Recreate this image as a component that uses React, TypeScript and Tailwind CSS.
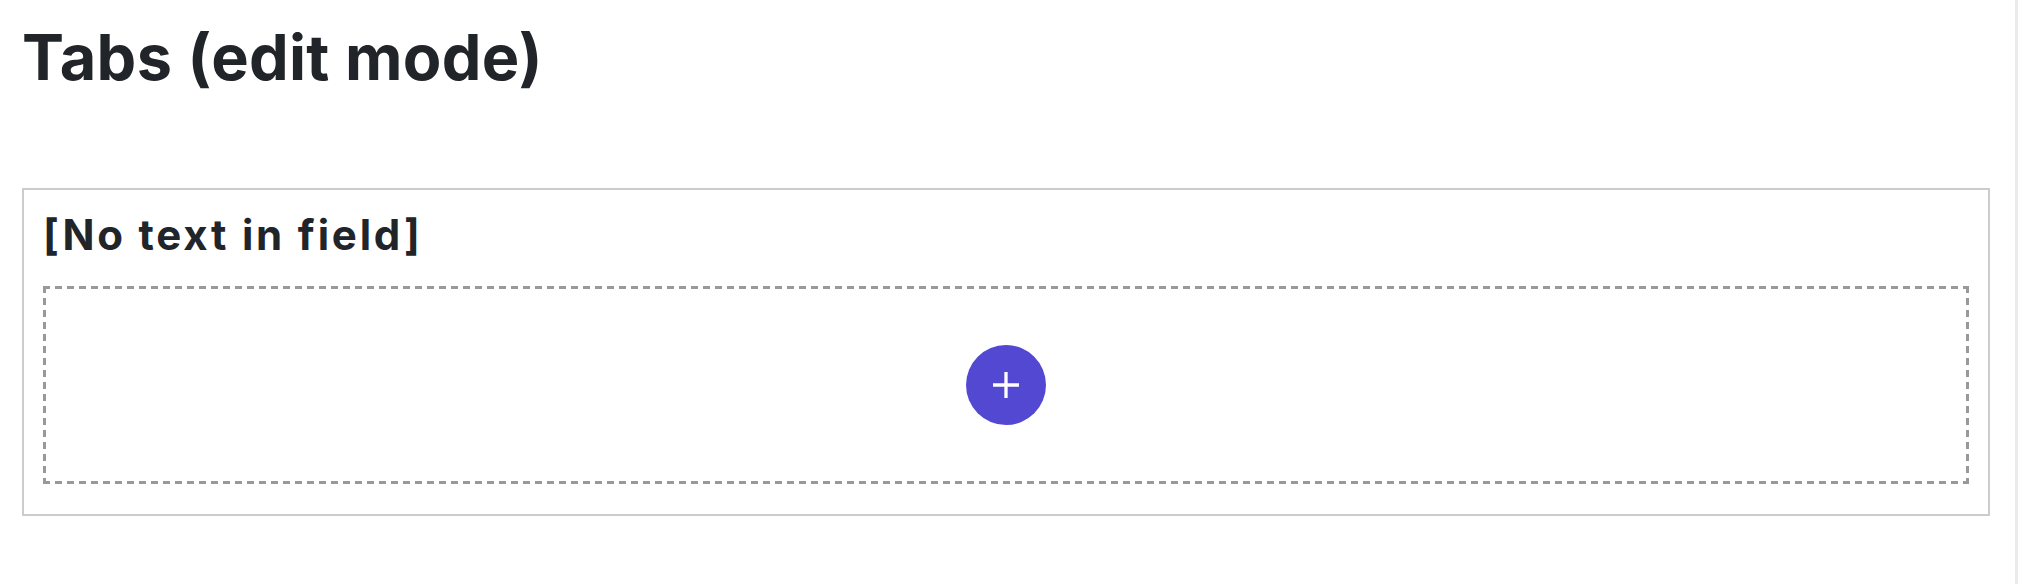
import React from 'react';

const PlusIcon = () => (
  <svg width="28" height="28" viewBox="0 0 28 28" aria-hidden="true">
    <path d="M14 1v26M1 14h26" stroke="#fff" strokeWidth="3.3" fill="none" />
  </svg>
);

const App = () => {
  return (
    <div className="flex min-h-[584px] w-full bg-white font-['Inter',sans-serif] text-[#212529]">
      <main className="flex-1 pl-[22px] pr-[25px] pt-[19px]">
        <h1 className="text-[63px] font-bold leading-[76px] tracking-[0.3px]">Tabs (edit mode)</h1>

        <section className="mt-[93px] border-2 border-[#cccccc] px-[19px] pt-[20px] pb-[30px]">
          <h3 className="text-[42px] font-bold leading-[49px] tracking-[2.8px]">[No text in field]</h3>

          {/* dashed drop zone: 7px dash / 5px gap, 3px thick */}
          <div className="mt-[27px] h-[198px] flex items-center justify-center bg-no-repeat bg-[image:repeating-linear-gradient(90deg,#999_0_7px,transparent_7px_12px),repeating-linear-gradient(90deg,#999_0_7px,transparent_7px_12px),repeating-linear-gradient(180deg,#999_0_7px,transparent_7px_12px),repeating-linear-gradient(180deg,#999_0_7px,transparent_7px_12px)] bg-[length:100%_3px,100%_3px,3px_100%,3px_100%] bg-[position:0_0,0_100%,0_0,100%_0]">
            <button
              type="button"
              className="w-[80px] h-[80px] rounded-full bg-[#5248d2] flex items-center justify-center"
            >
              <PlusIcon />
            </button>
          </div>
        </section>
      </main>
      <div className="w-[3px] bg-[#ebebeb]"></div>
    </div>
  );
};

export default App;
